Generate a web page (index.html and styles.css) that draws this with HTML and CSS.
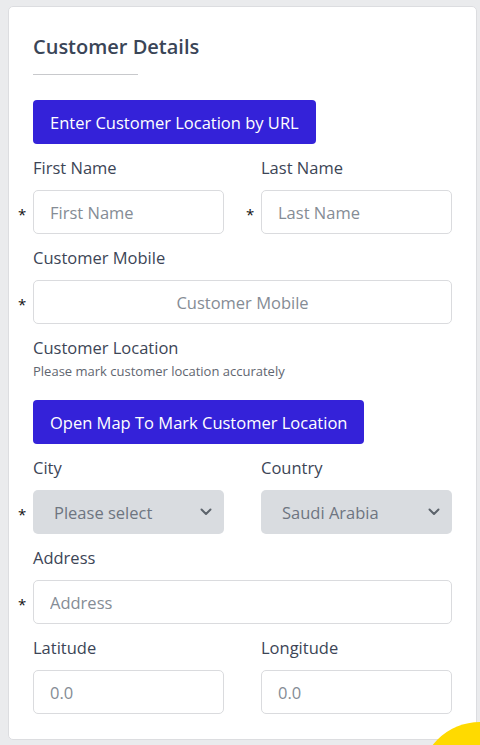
FILE: index.html
```html
<!DOCTYPE html>
<html lang="en">
<head>
<meta charset="utf-8">
<title>Customer Details</title>
<link rel="stylesheet" href="styles.css">
</head>
<body>
<div class="page">
  <section class="card">
    <h2 class="card-title">Customer Details</h2>
    <hr class="title-rule">
    <button class="btn-primary" type="button">Enter Customer Location by URL</button>

    <div class="row">
      <div class="field">
        <label class="label">First Name</label>
        <div class="control required"><input class="input" placeholder="First Name"></div>
      </div>
      <div class="field">
        <label class="label">Last Name</label>
        <div class="control required"><input class="input" placeholder="Last Name"></div>
      </div>
    </div>

    <div class="field">
      <label class="label">Customer Mobile</label>
      <div class="control required"><input class="input input-center" placeholder="Customer Mobile"></div>
    </div>

    <div class="field">
      <label class="label">Customer Location</label>
      <p class="help">Please mark customer location accurately</p>
      <button class="btn-primary" type="button">Open Map To Mark Customer Location</button>
    </div>

    <div class="row">
      <div class="field">
        <label class="label">City</label>
        <div class="control required">
          <div class="select"><span>Please select</span>
            <svg class="chev" width="12" height="8" viewBox="0 0 12 8"><path d="M1.5 1.5 6 6l4.5-4.5" fill="none" stroke="#5c636b" stroke-width="2" stroke-linecap="round" stroke-linejoin="round"/></svg>
          </div>
        </div>
      </div>
      <div class="field">
        <label class="label">Country</label>
        <div class="control">
          <div class="select"><span>Saudi Arabia</span>
            <svg class="chev" width="12" height="8" viewBox="0 0 12 8"><path d="M1.5 1.5 6 6l4.5-4.5" fill="none" stroke="#5c636b" stroke-width="2" stroke-linecap="round" stroke-linejoin="round"/></svg>
          </div>
        </div>
      </div>
    </div>

    <div class="field">
      <label class="label">Address</label>
      <div class="control required"><input class="input" placeholder="Address"></div>
    </div>

    <div class="row">
      <div class="field">
        <label class="label">Latitude</label>
        <div class="control"><input class="input" placeholder="0.0"></div>
      </div>
      <div class="field">
        <label class="label">Longitude</label>
        <div class="control"><input class="input" placeholder="0.0"></div>
      </div>
    </div>
  </section>
</div>
<div class="fab"></div>
</body>
</html>
```

FILE: styles.css
```css
* { box-sizing: border-box; }
html, body { margin: 0; padding: 0; }
body {
  background: #eaebed;
  font-family: "Open Sans", "Noto Sans", sans-serif;
  color: #3c4556;
  width: 480px;
  height: 745px;
  overflow: hidden;
}
.page { padding: 6px 3px 0 8px; }
.card {
  background: #fff;
  border: 1px solid #dcdde0;
  border-radius: 5px;
  padding: 26px 24px 25px 24px;
  height: 734px;
}
.card-title {
  margin: 0;
  font-size: 20px;
  font-weight: 600;
  line-height: 28px;
  color: #3a4557;
}
.title-rule {
  border: 0;
  border-top: 1px solid #c8c9cc;
  width: 105px;
  margin: 13px 0 25px 0;
}
.btn-primary {
  display: inline-block;
  background: #3422d9;
  color: #fff;
  border: 0;
  border-radius: 4px;
  height: 44px;
  padding: 0 17px;
  font-family: inherit;
  font-size: 16.5px;
  cursor: pointer;
}
.row {
  display: grid;
  grid-template-columns: 191px 191px;
  column-gap: 37px;
}
.field { margin-top: 12px; }
.label {
  display: block;
  font-size: 16.5px;
  line-height: 24px;
  color: #3c4556;
  margin-bottom: 10px;
}
.help {
  margin: -7px 0 21px 0;
  font-size: 13px;
  line-height: 16px;
  color: #5f6670;
}
.control { position: relative; }
.control.required::before {
  content: "*";
  position: absolute;
  left: -15px;
  top: 14px;
  font-size: 15px;
  color: #111;
  line-height: 20px;
}
.input {
  display: block;
  width: 100%;
  height: 44px;
  border: 1px solid #dadbde;
  border-radius: 5px;
  padding: 0 16px;
  font-family: inherit;
  font-size: 16.5px;
  color: #333;
  background: #fff;
  outline: none;
}
.input::placeholder { color: #858c95; }
.input-center { text-align: center; }
.select {
  display: flex;
  align-items: center;
  justify-content: space-between;
  height: 44px;
  background: #d9dce0;
  border-radius: 5px;
  padding: 0 12px 0 21px;
  font-size: 16.5px;
  color: #6e7580;
}
.chev { display: block; }
.fab {
  position: fixed;
  left: 420px;
  top: 722px;
  width: 120px;
  height: 120px;
  border-radius: 50%;
  background: #ffda00;
}
```
